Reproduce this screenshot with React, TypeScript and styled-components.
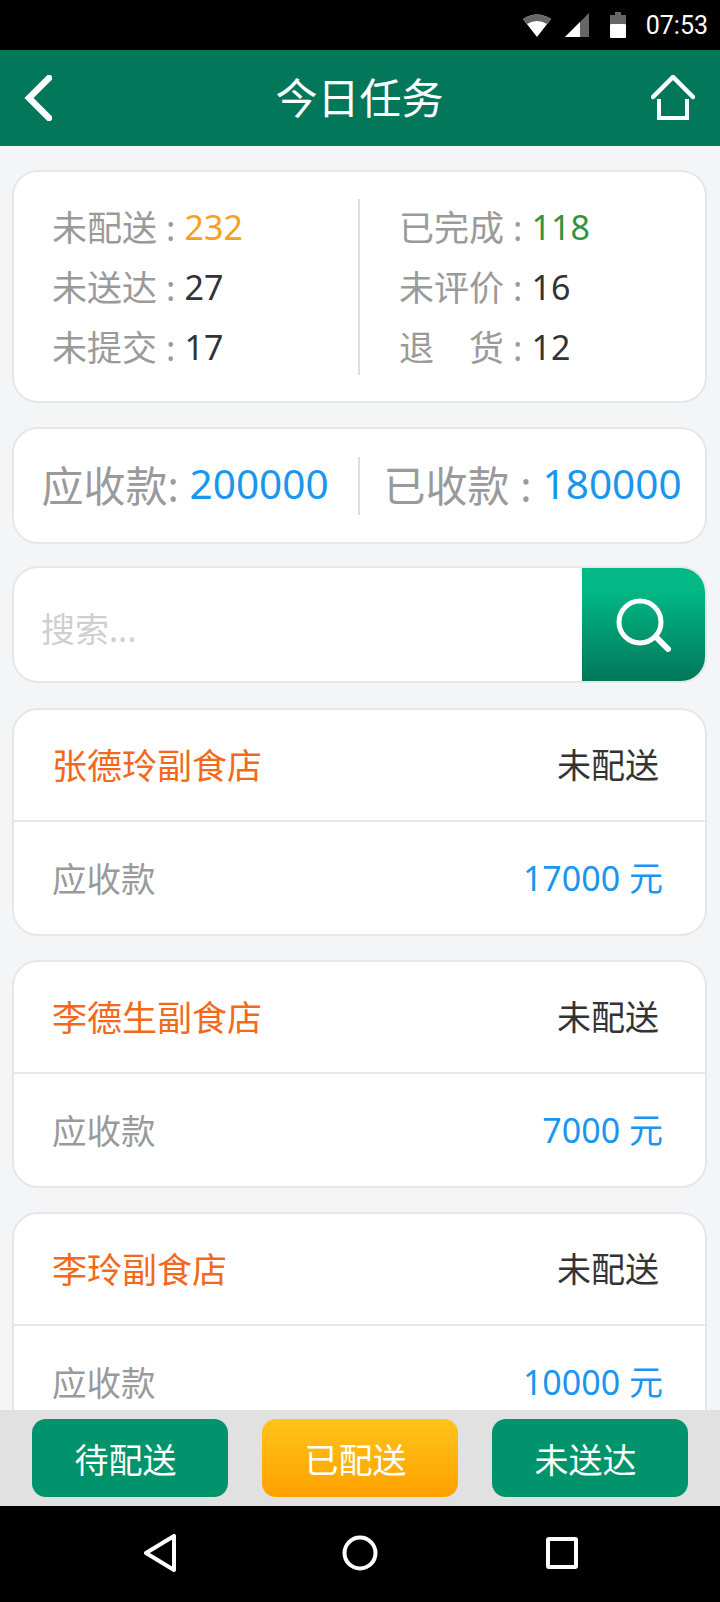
import React from "react";
import styled, { createGlobalStyle } from "styled-components";

const GlobalStyle = createGlobalStyle`
  html, body {
    margin: 0;
    padding: 0;
    background: #000;
  }
  * {
    box-sizing: border-box;
  }
`;

const Page = styled.div`
  width: 720px;
  height: 1602px;
  display: flex;
  flex-direction: column;
  overflow: hidden;
  background: #f3f5f6;
  font-family: "Noto Sans", "Noto Sans CJK SC", sans-serif;
`;

const StatusBar = styled.div`
  height: 50px;
  flex-shrink: 0;
  background: #000;
  display: flex;
  align-items: center;
  justify-content: flex-end;
  padding: 0 12px 0 0;
  svg {
    display: block;
  }
`;

const StatusIcon = styled.svg<{ $gap?: number }>`
  margin-left: ${(p) => p.$gap || 0}px;
`;

const Clock = styled.span`
  margin-left: 20px;
  color: #fff;
  font-family: Roboto, sans-serif;
  font-size: 25px;
`;

const Header = styled.div`
  height: 96px;
  flex-shrink: 0;
  background: #02775a;
  display: flex;
  align-items: center;
  justify-content: space-between;
  padding: 0 25px 0 24px;
`;

const HeaderSlot = styled.div<{ $right?: boolean }>`
  width: 46px;
  display: flex;
  justify-content: ${(p) => (p.$right ? "flex-end" : "flex-start")};
`;

const Title = styled.h1`
  margin: 0;
  color: #fff;
  font-size: 42px;
  font-weight: 400;
  line-height: 1;
`;

const Content = styled.div`
  flex: 1;
  min-height: 0;
  overflow: hidden;
  padding: 24px 13px 0 12px;
  display: flex;
  flex-direction: column;
  gap: 26px;
`;

const Card = styled.div`
  flex-shrink: 0;
  background: #fff;
  border: 2px solid #e5e7e8;
  border-radius: 26px;
`;

const StatsCard = styled(Card)`
  height: 233px;
  margin-bottom: -2px;
  display: flex;
  align-items: center;
`;

const StatsColumn = styled.div`
  flex: 1;
  height: 176px;
  padding-left: 38px;
  display: flex;
  flex-direction: column;
  gap: 4px;
  &:first-child {
    flex: 0 0 344px;
  }
  & + & {
    padding-left: 39px;
    border-left: 2px solid #dedede;
  }
`;

const StatRow = styled.div`
  height: 56px;
  display: flex;
  align-items: center;
  font-size: 35px;
  white-space: pre;
  color: #9a9a9a;
`;

const StatLabel = styled.span`
  margin-top: -3px;
`;

const StatValue = styled.span<{ $color?: string }>`
  font-size: 34px;
  color: ${(p) => p.$color || "#333"};
`;

const MoneyCard = styled(Card)`
  height: 117px;
  margin-bottom: -4px;
  display: flex;
  align-items: center;
`;

const MoneyItem = styled.div`
  flex: 1;
  height: 58px;
  padding-bottom: 4px;
  display: flex;
  align-items: center;
  justify-content: center;
  font-size: 42px;
  white-space: pre;
  color: #9a9a9a;
  &:first-child {
    flex: 0 0 344px;
    padding-right: 2px;
  }
  & + & {
    border-left: 2px solid #dedede;
  }
`;

const MoneyValue = styled.span`
  font-size: 40.5px;
  color: #1a96ee;
`;

const SearchCard = styled(Card)`
  height: 117px;
  margin-bottom: -1px;
  display: flex;
  overflow: hidden;
`;

const SearchInput = styled.div`
  flex: 1;
  display: flex;
  align-items: center;
  padding: 6px 0 0 27px;
  font-size: 34px;
  color: #cfcfcf;
`;

const SearchButton = styled.div`
  width: 123px;
  display: flex;
  align-items: center;
  justify-content: center;
  background: linear-gradient(#02b884 0%, #02b884 20%, #02765a 100%);
`;

const TaskCard = styled(Card)`
  height: 228px;
  margin-bottom: -2px;
  display: flex;
  flex-direction: column;
`;

const TaskRow = styled.div`
  flex: 1;
  display: flex;
  align-items: center;
  justify-content: space-between;
  padding: 0 42px 3px 38px;
  font-size: 35px;
  &:first-child {
    flex: 0 0 110px;
    padding-bottom: 4px;
  }
  & + & {
    border-top: 2px solid #e5e7e8;
  }
`;

const ShopName = styled.span`
  color: #f2691b;
`;

const TaskStatus = styled.span`
  margin-right: 4px;
  font-size: 34px;
  color: #333;
`;

const RowLabel = styled.span`
  font-size: 34.5px;
  color: #9a9a9a;
`;

const Amount = styled.span`
  font-size: 34px;
  color: #1a96ee;
`;

const BottomBar = styled.div`
  height: 96px;
  flex-shrink: 0;
  background: #e1e1e1;
  display: flex;
  align-items: center;
  justify-content: space-between;
  padding: 0 32px;
`;

const TabButton = styled.div<{ $active?: boolean }>`
  width: 196px;
  height: 78px;
  border-radius: 14px;
  padding-right: 9px;
  display: flex;
  align-items: center;
  justify-content: center;
  color: #fff;
  font-size: 34px;
  background: ${(p) => (p.$active ? "linear-gradient(#ffc41a, #ffa000)" : "#01936b")};
`;

const NavBar = styled.div`
  height: 96px;
  flex-shrink: 0;
  background: #000;
  display: flex;
  align-items: center;
  justify-content: center;
  padding-bottom: 2px;
`;

const NavSlot = styled.div`
  width: 200px;
  display: flex;
  justify-content: center;
`;

const stats = [
  [
    { label: "未配送", value: "232", color: "#f5a11c" },
    { label: "未送达", value: "27" },
    { label: "未提交", value: "17" },
  ],
  [
    { label: "已完成", value: "118", color: "#34923f" },
    { label: "未评价", value: "16" },
    { label: "退　货", value: "12" },
  ],
];

const tasks = [
  { name: "张德玲副食店", amount: "17000 元" },
  { name: "李德生副食店", amount: "7000 元" },
  { name: "李玲副食店", amount: "10000 元" },
];

const App = () => {
  return (
    <Page>
      <GlobalStyle />
      <StatusBar>
        <StatusIcon width="28" height="24" viewBox="0 0 28 24">
          <path d="M0 6 Q14 -3 28 6 L14 24 Z" fill="#fff" />
          <path d="M0 6 Q14 -3 28 6 L24 11 Q14 5 4 11 Z" fill="#666" />
        </StatusIcon>
        <StatusIcon $gap={14} width="24" height="24" viewBox="0 0 24 24">
          <path d="M0 24 L24 0 V24 Z" fill="#666" />
          <path d="M0 24 L15 9 V24 Z" fill="#fff" />
        </StatusIcon>
        <StatusIcon $gap={21} width="16" height="26" viewBox="0 0 16 26">
          <path d="M5 0 H11 V3 H16 V12 H0 V3 H5 Z" fill="#666" />
          <rect x="0" y="12" width="16" height="14" rx="1" fill="#fff" />
        </StatusIcon>
        <Clock>07:53</Clock>
      </StatusBar>

      <Header>
        <HeaderSlot>
          <svg width="28" height="46" viewBox="0 0 28 46">
            <path d="M25 3 L5 23 L25 43" fill="none" stroke="#fff" strokeWidth="6.5" strokeLinecap="round" />
          </svg>
        </HeaderSlot>
        <Title>今日任务</Title>
        <HeaderSlot $right>
          <svg width="44" height="46" viewBox="0 0 44 46">
            <path d="M2 22 L22 2 L42 22" fill="none" stroke="#fff" strokeWidth="4.5" strokeLinecap="round" />
            <path d="M8 24 V43 H36 V24" fill="none" stroke="#fff" strokeWidth="4" />
          </svg>
        </HeaderSlot>
      </Header>

      <Content>
        <StatsCard>
          {stats.map((col, i) => (
            <StatsColumn key={i}>
              {col.map((s) => (
                <StatRow key={s.label}>
                  <StatLabel>{s.label} : </StatLabel>
                  <StatValue $color={s.color}>{s.value}</StatValue>
                </StatRow>
              ))}
            </StatsColumn>
          ))}
        </StatsCard>

        <MoneyCard>
          <MoneyItem>
            应收款: <MoneyValue>200000</MoneyValue>
          </MoneyItem>
          <MoneyItem>
            已收款 : <MoneyValue>180000</MoneyValue>
          </MoneyItem>
        </MoneyCard>

        <SearchCard>
          <SearchInput>搜索...</SearchInput>
          <SearchButton>
            <svg width="58" height="54" viewBox="0 0 58 54">
              <circle cx="25" cy="24" r="21" fill="none" stroke="#fff" strokeWidth="5" />
              <path d="M41 39 L53 51" stroke="#fff" strokeWidth="6" strokeLinecap="round" />
            </svg>
          </SearchButton>
        </SearchCard>

        {tasks.map((t) => (
          <TaskCard key={t.name}>
            <TaskRow>
              <ShopName>{t.name}</ShopName>
              <TaskStatus>未配送</TaskStatus>
            </TaskRow>
            <TaskRow>
              <RowLabel>应收款</RowLabel>
              <Amount>{t.amount}</Amount>
            </TaskRow>
          </TaskCard>
        ))}
      </Content>

      <BottomBar>
        <TabButton>待配送</TabButton>
        <TabButton $active>已配送</TabButton>
        <TabButton>未送达</TabButton>
      </BottomBar>

      <NavBar>
        <NavSlot>
          <svg width="34" height="38" viewBox="0 0 34 38">
            <path d="M31 2 V36 L3 19 Z" fill="none" stroke="#fff" strokeWidth="4" strokeLinejoin="round" />
          </svg>
        </NavSlot>
        <NavSlot>
          <svg width="36" height="36" viewBox="0 0 36 36">
            <circle cx="18" cy="18" r="15.5" fill="none" stroke="#fff" strokeWidth="4" />
          </svg>
        </NavSlot>
        <NavSlot>
          <svg width="36" height="32" viewBox="0 0 36 32">
            <rect x="6" y="2" width="28" height="28" rx="1" fill="none" stroke="#fff" strokeWidth="4" />
          </svg>
        </NavSlot>
      </NavBar>
    </Page>
  );
};

export default App;
